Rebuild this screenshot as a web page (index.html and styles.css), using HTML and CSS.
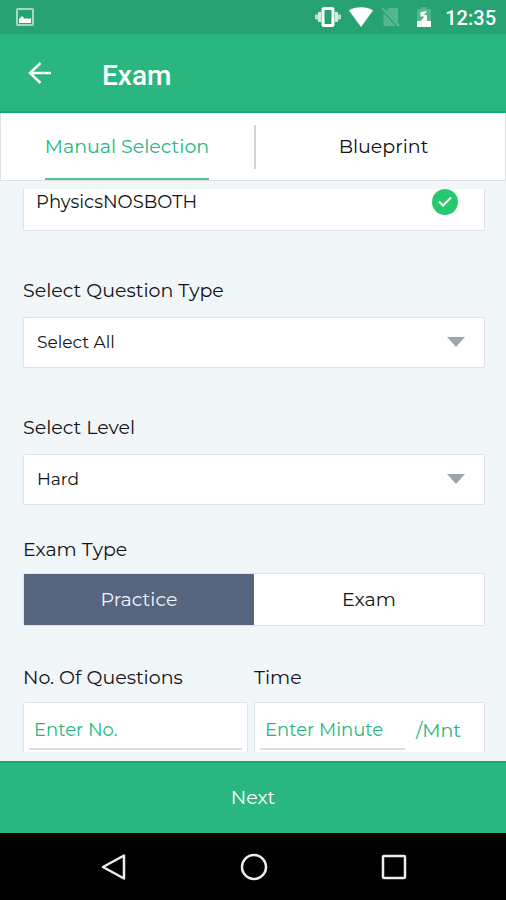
FILE: index.html
```html
<!DOCTYPE html>
<html lang="en">
<head>
<meta charset="utf-8">
<meta name="viewport" content="width=device-width, initial-scale=1">
<title>Exam</title>
<link rel="stylesheet" href="styles.css">
</head>
<body>
<div class="status">
  <svg width="18" height="18" viewBox="0 0 18 18" aria-hidden="true"><rect x="1" y="1" width="16" height="16" rx="1" fill="none" stroke="#a5d9c2" stroke-width="2"/><path d="M3 15v-4l3-3 3 3 2-1 2 1 2-1v5z" fill="#fff"/></svg>
  <div class="status-right">
    <svg width="26" height="20" viewBox="0 0 26 20" aria-hidden="true"><rect x="8" y="1.500" width="10" height="17" rx="1" fill="none" stroke="#fff" stroke-width="3"/><path d="M4.500 5v10M21.500 5v10" stroke="#d5eee3" stroke-width="3"/><path d="M1.500 7.500v5M24.500 7.500v5" stroke="#b5e0cd" stroke-width="3"/></svg>
    <svg class="wifi" width="24" height="20" viewBox="0 0 24 20" aria-hidden="true"><path d="M0 3.500C6-.8 18-.8 24 3.500L12 20z" fill="#fff"/></svg>
    <svg class="sim" width="20" height="20" viewBox="0 0 20 20" aria-hidden="true"><path d="M8 1h9v15L5 4zM2.500 6L15 19H2.500z" fill="#55b58b"/><path d="M1 1l17 18" stroke="#68bf98" stroke-width="1.500"/></svg>
    <svg class="battery" width="14" height="20" viewBox="0 0 14 20" aria-hidden="true"><path d="M4 0h6v2h4v12H0V2h4z" fill="#55b58b"/><path d="M0 14h14v6H0zM10 4L3.500 5v4.500h4L4 14h6V8H7z" fill="#fff"/></svg>
    <time class="clock">12:35</time>
  </div>
</div>
<header class="appbar">
  <button class="back" type="button" aria-label="Back"><svg width="24" height="24" viewBox="0 0 24 24" aria-hidden="true"><path d="M23 12H2M12.500 2L2 12l10.500 10" fill="none" stroke="#fff" stroke-width="2.500"/></svg></button>
  <h1>Exam</h1>
</header>
<nav class="tabs">
  <a class="tab active" href="#manual"><span>Manual Selection</span></a>
  <a class="tab" href="#blueprint"><span>Blueprint</span></a>
</nav>
<main class="panel">
  <form class="form" id="exam-form">
    <div class="subject box"><span>PhysicsNOSBOTH</span>
      <svg width="26" height="26" viewBox="0 0 26 26" aria-hidden="true"><circle cx="13" cy="13" r="13" fill="#27c76f"/><path d="M7 12.500l4 4 8-8" fill="none" stroke="#fff" stroke-width="2"/></svg>
    </div>
    <div class="field">
      <label for="qtype">Select Question Type</label>
      <div class="select box"><select id="qtype"><option>Select All</option></select><svg width="18" height="10" viewBox="0 0 18 10" aria-hidden="true"><path d="M0 0h18L9 10z" fill="#9ca5aa"/></svg></div>
    </div>
    <div class="field">
      <label for="level">Select Level</label>
      <div class="select box"><select id="level"><option>Hard</option></select><svg width="18" height="10" viewBox="0 0 18 10" aria-hidden="true"><path d="M0 0h18L9 10z" fill="#9ca5aa"/></svg></div>
    </div>
    <div class="field type" role="group" aria-labelledby="type-label">
      <span class="label" id="type-label">Exam Type</span>
      <div class="segments box">
        <button class="on" type="button">Practice</button>
        <button type="button">Exam</button>
      </div>
    </div>
    <div class="pair">
      <div class="field">
        <label for="count">No. Of Questions</label>
        <div class="entry box"><input id="count" type="text" placeholder="Enter No."></div>
      </div>
      <div class="field">
        <label for="minutes">Time</label>
        <div class="entry box"><input id="minutes" type="text" placeholder="Enter Minute"><span class="unit">/Mnt</span></div>
      </div>
    </div>
  </form>
</main>
<button class="next" type="submit" form="exam-form">Next</button>
<div class="navbar">
  <button type="button" aria-label="System back"><svg width="28" height="28" viewBox="0 0 28 28" aria-hidden="true"><path d="M24 2.500v23L3 14z" fill="none" stroke="#eee" stroke-width="2.500" stroke-linejoin="round"/></svg></button>
  <button type="button" aria-label="Home"><svg width="28" height="28" viewBox="0 0 28 28" aria-hidden="true"><circle cx="14" cy="14" r="12" fill="none" stroke="#eee" stroke-width="2.500"/></svg></button>
  <button type="button" aria-label="Recent apps"><svg width="28" height="28" viewBox="0 0 28 28" aria-hidden="true"><rect x="3" y="3" width="22" height="22" rx="1" fill="none" stroke="#eee" stroke-width="2.500"/></svg></button>
</div>
</body>
</html>
```
FILE: styles.css
```css
* { box-sizing: border-box; }
body {
  margin: 0;
  height: 100vh;
  display: flex;
  flex-direction: column;
  overflow: hidden;
  background: #f1f6f9;
  color: #111315;
  font-family: Montserrat, Inter, sans-serif;
  font-size: 19px;
  line-height: 24px;
}
button, input, select { font: inherit; color: inherit; border: 0; padding: 0; margin: 0; background: none; border-radius: 0; }
svg { display: block; flex: none; }

.status {
  flex: none;
  height: 34px;
  padding: 0 10px 0 16px;
  display: flex;
  align-items: center;
  justify-content: space-between;
  background: #27a372;
  color: #fff;
}
.status-right { display: flex; align-items: center; }
.wifi { margin-left: 8px; }
.sim { margin-left: 8px; }
.battery { margin-left: 16px; }
.clock { margin-left: 14px; padding-top: 2px; font: 500 20px/24px Roboto, sans-serif; }

.appbar {
  flex: none;
  height: 79px;
  padding: 0 28px;
  display: flex;
  align-items: center;
  gap: 50px;
  background: #29b67f;
  border-bottom: 2px solid #12ad74;
  color: #fff;
}
h1 { margin: 6px 0 0; font: 500 28px/32px Roboto, sans-serif; }

.tabs {
  flex: none;
  height: 68px;
  display: grid;
  grid-template-columns: 255fr 249fr;
  background: #fff;
  border: 1px solid #dde1e4;
  border-top: 0;
}
.tab {
  display: flex;
  justify-content: center;
  padding-left: 6px;
  position: relative;
  color: #111;
  text-decoration: none;
}
.tab span { padding-top: 22px; }
.tab.active { padding: 0 3px 0 0; }
.tab.active span { color: #29b67f; border-bottom: 2px solid #5cbf94; }
.tab.active::after {
  content: "";
  position: absolute;
  right: 0;
  top: 12px;
  width: 2px;
  height: 44px;
  background: #cdd5df;
}

.panel { flex: 1; min-height: 0; padding: 8px 21px 9px 23px; display: flex; }
.form { flex: 1; min-width: 0; overflow: hidden; }
.box { background: #fff; border: 1px solid #dfe3e6; border-radius: 2px; }
.subject {
  height: 52px;
  margin-top: -10px;
  padding: 0 26px 6px 12px;
  display: flex;
  align-items: center;
  justify-content: space-between;
  font-size: 18px;
}
.field { margin-top: 48px; }
label, .label { display: block; }
.select { height: 51px; margin-top: 14px; padding-bottom: 2px; display: grid; align-items: center; font-size: 17px; }
.select select { grid-area: 1 / 1; width: 100%; height: 100%; padding: 0 48px 0 13px; appearance: none; }
.select svg { grid-area: 1 / 1; justify-self: end; margin-right: 19px; pointer-events: none; }

.type { margin-top: 33px; }
.segments { display: flex; height: 53px; margin-top: 11px; }
.segments button { flex: 1; }
.segments .on { background: #56647e; color: #f1f4fa; }

.pair { display: grid; grid-template-columns: 225fr 231fr; gap: 6px; margin-top: 40px; }
.pair .field { margin-top: 0; min-width: 0; }
.entry { display: flex; gap: 11px; height: 60px; margin-top: 12px; padding: 8px 5px; color: #29b67f; font-size: 18px; }
.entry input { flex: 1; min-width: 0; height: 39px; padding: 0 5px; border-bottom: 2px solid #d7dfe3; }
.entry input::placeholder { color: #29b67f; opacity: 1; }
.unit { padding: 8px 18px 0 0; font-size: 19px; }

.next { flex: none; height: 72px; background: #29b67f; border-top: 2px solid #12ad74; color: #fff; }
.navbar { flex: none; height: 67px; padding-left: 2px; display: flex; align-items: center; justify-content: center; gap: 112px; background: #000; }
```
